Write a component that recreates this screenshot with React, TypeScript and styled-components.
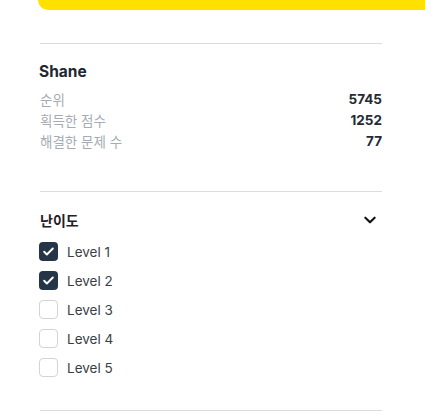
import styled, { createGlobalStyle } from 'styled-components';

const GlobalStyle = createGlobalStyle`
  body {
    margin: 0;
    background: #ffffff;
    font-family: Inter, "Noto Sans CJK KR", sans-serif;
  }
`;

const stats = [
  { label: '순위', value: '5745' },
  { label: '획득한 점수', value: '1252' },
  { label: '해결한 문제 수', value: '77' },
];

const levels = [
  { name: 'Level 1', checked: true },
  { name: 'Level 2', checked: true },
  { name: 'Level 3', checked: false },
  { name: 'Level 4', checked: false },
  { name: 'Level 5', checked: false },
];

function CheckIcon() {
  return (
    <svg width="13" height="13" viewBox="0 0 24 24" fill="none">
      <path d="M4 12.5l5 5L20 6.5" stroke="#ffffff" strokeWidth="3.6" strokeLinecap="round" strokeLinejoin="round" />
    </svg>
  );
}

function ChevronIcon() {
  return (
    <svg width="14" height="14" viewBox="0 0 24 24" fill="none">
      <path d="M4 8l8 8 8-8" stroke="#111111" strokeWidth="3.6" strokeLinecap="round" strokeLinejoin="round" />
    </svg>
  );
}

function App() {
  return (
    <StyledRoot>
      <GlobalStyle />
      <StyledBanner />
      <StyledSidebar>
        <StyledSection>
          <StyledName>Shane</StyledName>
          {stats.map((s) => (
            <StyledStatRow key={s.label}>
              <span>{s.label}</span>
              <strong>{s.value}</strong>
            </StyledStatRow>
          ))}
        </StyledSection>
        <StyledSection $bottom={28}>
          <StyledFilterHeader>
            <h4>난이도</h4>
            <ChevronIcon />
          </StyledFilterHeader>
          <ul>
            {levels.map((l) => (
              <StyledLevel key={l.name}>
                <StyledCheckbox $checked={l.checked}>{l.checked && <CheckIcon />}</StyledCheckbox>
                <span>{l.name}</span>
              </StyledLevel>
            ))}
          </ul>
        </StyledSection>
        <StyledDivider />
      </StyledSidebar>
    </StyledRoot>
  );
}

const StyledRoot = styled.main`
  width: 425px;
  height: 414px;
  overflow: hidden;
`;

const StyledBanner = styled.div`
  margin-left: 38px;
  height: 10px;
  background-color: #ffe100;
  border-bottom-left-radius: 12px;
`;

const StyledSidebar = styled.aside`
  width: 342px;
  margin: 33px 0 0 40px;
  display: flex;
  flex-direction: column;
`;

const StyledSection = styled.section<{ $bottom?: number }>`
  border-top: 1px solid #dcdcdc;
  padding: 18px 0 ${({ $bottom }) => $bottom ?? 40}px 0;

  & > ul {
    margin: 7px 0 0 0;
    padding: 0;
    list-style: none;
  }
`;

const StyledName = styled.h3`
  margin: 0 0 6px -1px;
  font-size: 15.5px;
  line-height: 20px;
  font-weight: 700;
  color: #1f2733;
`;

const StyledStatRow = styled.div`
  display: flex;
  justify-content: space-between;
  align-items: center;
  height: 21px;
  font-size: 13.5px;

  & > span {
    color: #a6abb3;
  }

  & > strong {
    font-weight: 700;
    color: #252a33;
  }
`;

const StyledFilterHeader = styled.div`
  display: flex;
  justify-content: space-between;
  align-items: center;
  height: 20px;
  padding-right: 5px;

  & > h4 {
    margin: 0;
    font-size: 14px;
    font-weight: 700;
    color: #1f2125;
  }
`;

const StyledLevel = styled.li`
  display: flex;
  align-items: center;
  gap: 9px;
  height: 29px;
  font-size: 13.5px;
  color: #3a3f47;
`;

const StyledCheckbox = styled.span<{ $checked: boolean }>`
  box-sizing: border-box;
  width: 19px;
  height: 19px;
  margin-left: -1px;
  border-radius: 4px;
  display: flex;
  align-items: center;
  justify-content: center;
  background-color: ${({ $checked }) => ($checked ? '#253446' : '#ffffff')};
  border: ${({ $checked }) => ($checked ? 'none' : '1.5px solid #d2d4d7')};
`;

const StyledDivider = styled.hr`
  margin: 0;
  border: 0;
  border-top: 1px solid #dcdcdc;
`;

export default App;
